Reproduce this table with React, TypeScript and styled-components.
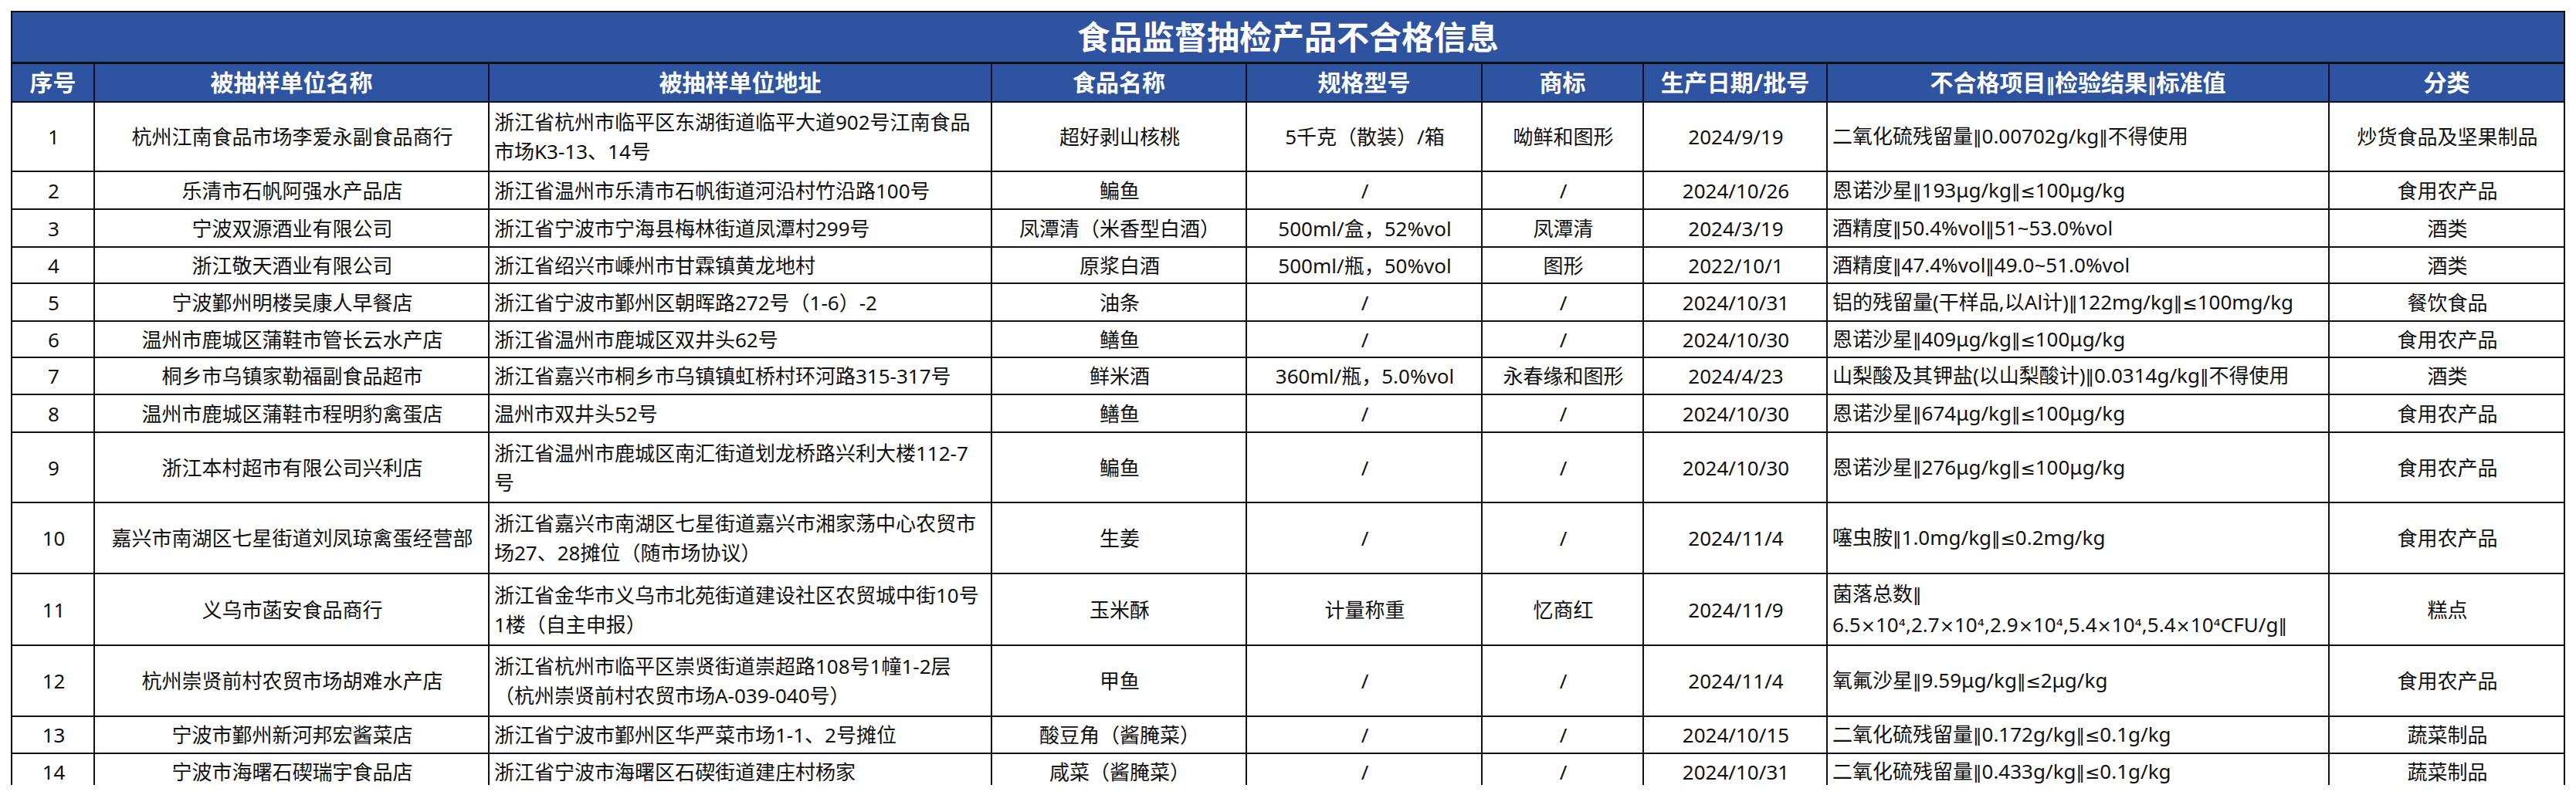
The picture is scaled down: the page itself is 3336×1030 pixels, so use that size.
import React from 'react';
import styled, { createGlobalStyle } from 'styled-components';

const blue = '#2e53a1';
const line = '#111';

const columns = [
	{ title: '序号', width: 107, align: 'center' },
	{ title: '被抽样单位名称', width: 511, align: 'center' },
	{ title: '被抽样单位地址', width: 651, align: 'left' },
	{ title: '食品名称', width: 330, align: 'center' },
	{ title: '规格型号', width: 305, align: 'center' },
	{ title: '商标', width: 209, align: 'center' },
	{ title: '生产日期/批号', width: 238, align: 'center' },
	{ title: '不合格项目‖检验结果‖标准值', width: 650, align: 'left' },
	{ title: '分类', width: 305, align: 'center' },
];

// height is the row height in px, cells in column order
const rows: { h: number; cells: string[] }[] = [
	{ h: 90, cells: ['1', '杭州江南食品市场李爱永副食品商行', '浙江省杭州市临平区东湖街道临平大道902号江南食品\n市场K3-13、14号', '超好剥山核桃', '5千克（散装）/箱', '呦鲜和图形', '2024/9/19', '二氧化硫残留量‖0.00702g/kg‖不得使用', '炒货食品及坚果制品'] },
	{ h: 49, cells: ['2', '乐清市石帆阿强水产品店', '浙江省温州市乐清市石帆街道河沿村竹沿路100号', '鳊鱼', '/', '/', '2024/10/26', '恩诺沙星‖193μg/kg‖≤100μg/kg', '食用农产品'] },
	{ h: 49, cells: ['3', '宁波双源酒业有限公司', '浙江省宁波市宁海县梅林街道凤潭村299号', '凤潭清（米香型白酒）', '500ml/盒，52%vol', '凤潭清', '2024/3/19', '酒精度‖50.4%vol‖51~53.0%vol', '酒类'] },
	{ h: 47, cells: ['4', '浙江敬天酒业有限公司', '浙江省绍兴市嵊州市甘霖镇黄龙地村', '原浆白酒', '500ml/瓶，50%vol', '图形', '2022/10/1', '酒精度‖47.4%vol‖49.0~51.0%vol', '酒类'] },
	{ h: 49, cells: ['5', '宁波鄞州明楼吴康人早餐店', '浙江省宁波市鄞州区朝晖路272号（1-6）-2', '油条', '/', '/', '2024/10/31', '铝的残留量(干样品,以Al计)‖122mg/kg‖≤100mg/kg', '餐饮食品'] },
	{ h: 47, cells: ['6', '温州市鹿城区蒲鞋市管长云水产店', '浙江省温州市鹿城区双井头62号', '鳝鱼', '/', '/', '2024/10/30', '恩诺沙星‖409μg/kg‖≤100μg/kg', '食用农产品'] },
	{ h: 48, cells: ['7', '桐乡市乌镇家勒福副食品超市', '浙江省嘉兴市桐乡市乌镇镇虹桥村环河路315-317号', '鲜米酒', '360ml/瓶，5.0%vol', '永春缘和图形', '2024/4/23', '山梨酸及其钾盐(以山梨酸计)‖0.0314g/kg‖不得使用', '酒类'] },
	{ h: 49, cells: ['8', '温州市鹿城区蒲鞋市程明豹禽蛋店', '温州市双井头52号', '鳝鱼', '/', '/', '2024/10/30', '恩诺沙星‖674μg/kg‖≤100μg/kg', '食用农产品'] },
	{ h: 91, cells: ['9', '浙江本村超市有限公司兴利店', '浙江省温州市鹿城区南汇街道划龙桥路兴利大楼112-7\n号', '鳊鱼', '/', '/', '2024/10/30', '恩诺沙星‖276μg/kg‖≤100μg/kg', '食用农产品'] },
	{ h: 92, cells: ['10', '嘉兴市南湖区七星街道刘凤琼禽蛋经营部', '浙江省嘉兴市南湖区七星街道嘉兴市湘家荡中心农贸市\n场27、28摊位（随市场协议）', '生姜', '/', '/', '2024/11/4', '噻虫胺‖1.0mg/kg‖≤0.2mg/kg', '食用农产品'] },
	{ h: 93, cells: ['11', '义乌市菡安食品商行', '浙江省金华市义乌市北苑街道建设社区农贸城中街10号\n1楼（自主申报）', '玉米酥', '计量称重', '忆商红', '2024/11/9', '菌落总数‖\n6.5×10⁴,2.7×10⁴,2.9×10⁴,5.4×10⁴,5.4×10⁴CFU/g‖', '糕点'] },
	{ h: 92, cells: ['12', '杭州崇贤前村农贸市场胡难水产店', '浙江省杭州市临平区崇贤街道崇超路108号1幢1-2层\n（杭州崇贤前村农贸市场A-039-040号）', '甲鱼', '/', '/', '2024/11/4', '氧氟沙星‖9.59μg/kg‖≤2μg/kg', '食用农产品'] },
	{ h: 48, cells: ['13', '宁波市鄞州新河邦宏酱菜店', '浙江省宁波市鄞州区华严菜市场1-1、2号摊位', '酸豆角（酱腌菜）', '/', '/', '2024/10/15', '二氧化硫残留量‖0.172g/kg‖≤0.1g/kg', '蔬菜制品'] },
	{ h: 48, cells: ['14', '宁波市海曙石碶瑞宇食品店', '浙江省宁波市海曙区石碶街道建庄村杨家', '咸菜（酱腌菜）', '/', '/', '2024/10/31', '二氧化硫残留量‖0.433g/kg‖≤0.1g/kg', '蔬菜制品'] },
];

const GlobalStyle = createGlobalStyle`
	body {
		margin: 0;
		background: #fff;
		font-family: "Noto Sans", "Noto Sans CJK SC", sans-serif;
		color: #111;
	}
`;

const Page = styled.div`
	padding: 14px 0 0 14px;
`;

// the screenshot cuts the sheet off inside the last row
const Viewport = styled.div`
	height: 1003px;
	overflow: hidden;
`;

const Sheet = styled.table`
	border-collapse: collapse;
	table-layout: fixed;
	width: 3306px;
`;

const TitleCell = styled.th`
	height: 64px;
	padding: 0;
	background: ${blue};
	color: #fff;
	font-size: 42px;
	font-weight: 700;
	line-height: 1;
	border: 2px solid ${line};
	border-bottom-width: 3px;
`;

const HeadCell = styled.th`
	height: 48px;
	padding: 0;
	background: ${blue};
	color: #fff;
	font-size: 30px;
	font-weight: 700;
	line-height: 1;
	border: 2px solid #0d0f24;
`;

const BodyRow = styled.tr<{ $h: number }>`
	height: ${(p) => p.$h}px;
`;

const Cell = styled.td<{ $align: string }>`
	padding: 0 4px 0 6px;
	border: 2px solid ${line};
	font-size: 26px;
	line-height: 38px;
	text-align: ${(p) => p.$align};
	vertical-align: middle;
	white-space: pre-line;
	overflow: hidden;
`;

// narrow glyphs for the separators and math signs, which the CJK font sets full width
const Narrow = styled.span`
	font-family: "DejaVu Sans", sans-serif;
	font-size: 23px;
`;

const rich = (text: string) =>
	text.split(/([‖≤×⁴])/).map((part, i) =>
		/^[‖≤×⁴]$/.test(part) ? <Narrow key={i}>{part}</Narrow> : part
	);

export default function App() {
	return (
		<>
			<GlobalStyle />
			<Page>
				<Viewport>
					<Sheet>
						<colgroup>
							{columns.map((c) => (
								<col key={c.title} style={{ width: c.width }} />
							))}
						</colgroup>
						<thead>
							<tr>
								<TitleCell colSpan={columns.length}>食品监督抽检产品不合格信息</TitleCell>
							</tr>
							<tr>
								{columns.map((c) => (
									<HeadCell key={c.title}>{rich(c.title)}</HeadCell>
								))}
							</tr>
						</thead>
						<tbody>
							{rows.map((r) => (
								<BodyRow key={r.cells[0]} $h={r.h}>
									{r.cells.map((text, i) => (
										<Cell key={i} $align={columns[i].align}>
											{rich(text)}
										</Cell>
									))}
								</BodyRow>
							))}
						</tbody>
					</Sheet>
				</Viewport>
			</Page>
		</>
	);
}
